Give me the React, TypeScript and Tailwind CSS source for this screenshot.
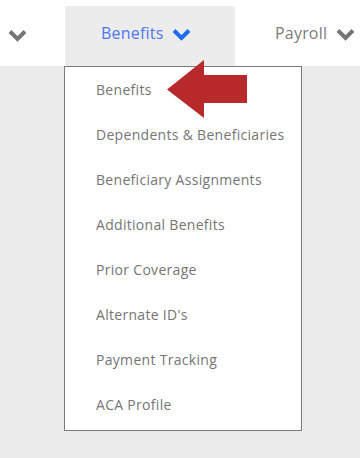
import React from 'react';

const items = [
  'Benefits',
  'Dependents & Beneficiaries',
  'Beneficiary Assignments',
  'Additional Benefits',
  'Prior Coverage',
  "Alternate ID's",
  'Payment Tracking',
  'ACA Profile',
];

const Chevron: React.FC<{ color: string }> = ({ color }) => (
  <svg width="19" height="13" viewBox="0 0 19 13" className="block">
    <polyline points="2,2.5 9.5,10 17,2.5" fill="none" stroke={color} strokeWidth={4} strokeLinejoin="miter" />
  </svg>
);

const App: React.FC = () => {
  return (
    <div className="w-[360px] h-[458px] bg-[#ebebeb] overflow-hidden" style={{ fontFamily: '"Open Sans", "Liberation Sans", sans-serif' }}>
      <div className="h-[66px] bg-white flex items-end">
        <div className="w-[65px] h-[60px] flex items-center pl-[8px] pb-[1px]">
          <Chevron color="#757575" />
        </div>

        <div className="relative w-[170px] h-[60px] bg-[#ececec] flex items-center pl-[36px] pb-[7px] gap-[9px]">
          <span className="text-[16px] text-[#4f76f6] tracking-[0.2px]">Benefits</span>
          <span className="pt-[4px]">
            <Chevron color="#1e6cf0" />
          </span>

          <div className="absolute top-full left-[-1px] w-[238px] h-[365px] bg-white border border-[#7a7a7a] pt-[0px]">
            {items.map((item) => (
              <div key={item} className="h-[45px] flex items-center pl-[31px] text-[14px] text-[#757575] tracking-[0.3px]">
                {item}
              </div>
            ))}
            <svg className="absolute left-[100px] top-[-8px]" width="82" height="60" viewBox="165 59 82 60">
              <polygon points="167,89.5 204,60 204,75 247,75 247,103 204,103 204,118" fill="#b8292b" />
            </svg>
          </div>
        </div>

        <div className="flex-1 h-[60px] flex items-center pl-[40px] pb-[7px] gap-[9px]">
          <span className="text-[16px] text-[#7a7a7a] tracking-[0.2px]">Payroll</span>
          <span className="pt-[4px]">
            <Chevron color="#757575" />
          </span>
        </div>
      </div>
    </div>
  );
};

export default App;
